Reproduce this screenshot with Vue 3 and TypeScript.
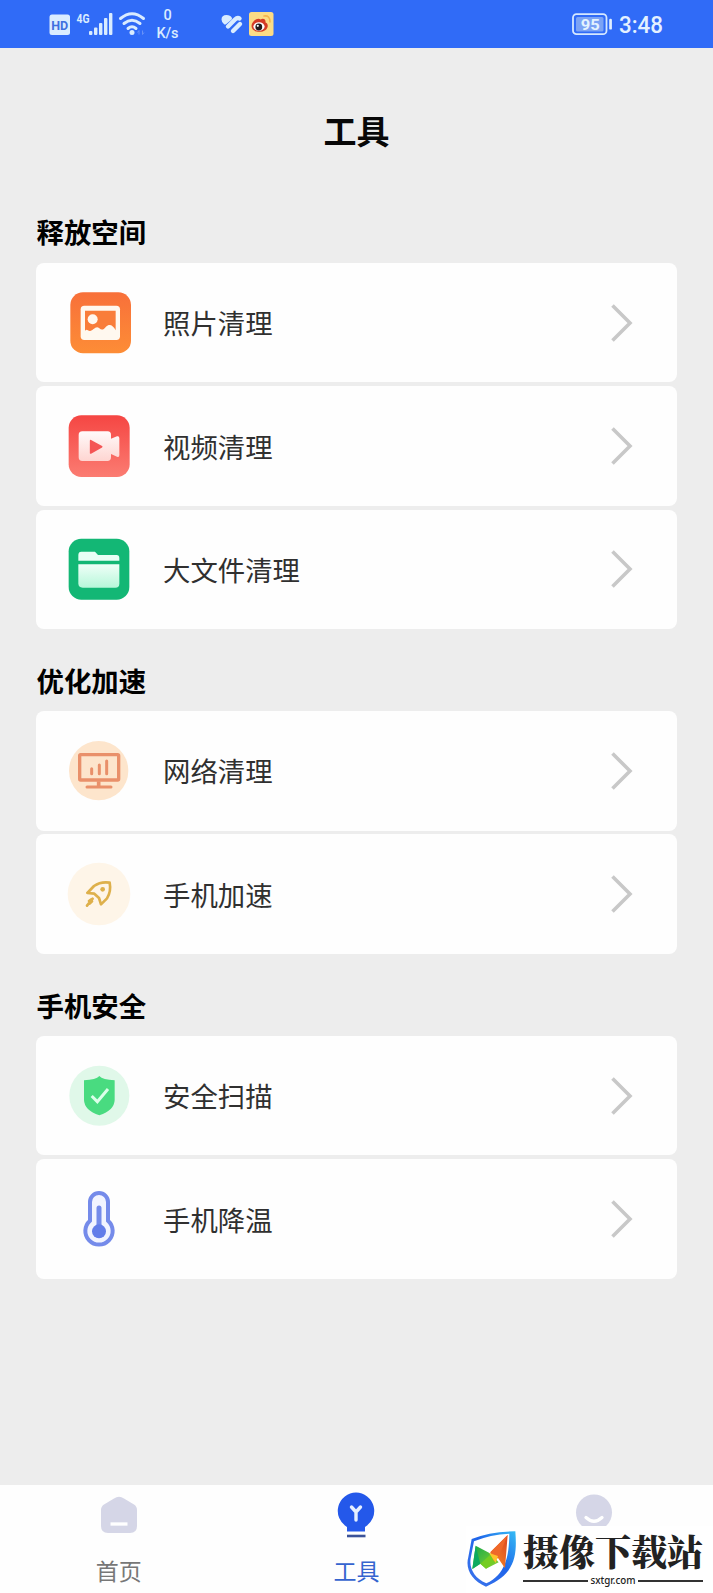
<script setup lang="ts">
interface Tool { icon: string; label: string; box: string }
interface Section { title: string; tools: Tool[] }

const sections: Section[] = [
  {
    title: '释放空间',
    tools: [
      { icon: 'photo', label: '照片清理', box: '141 271 192 192' },
      { icon: 'video', label: '视频清理', box: '141 101 192 192' },
      { icon: 'folder', label: '大文件清理', box: '141 472 192 192' },
    ],
  },
  {
    title: '优化加速',
    tools: [
      { icon: 'network', label: '网络清理', box: '141 266 192 192' },
      { icon: 'rocket', label: '手机加速', box: '141 636 192 192' },
    ],
  },
  {
    title: '手机安全',
    tools: [
      { icon: 'shield', label: '安全扫描', box: '141 250 192 192' },
      { icon: 'thermo', label: '手机降温', box: '141 619 192 192' },
    ],
  },
]
</script>

<template>
  <div class="screen">
    <header class="status">
      <svg class="status-left" viewBox="0 0 260 48" width="260" height="48">
        <rect x="19.5" y="14.5" width="20.5" height="20.5" rx="2.5" fill="#d9ecff" />
        <text x="29.7" y="29.7" text-anchor="middle" font-size="13.5" font-weight="700" textLength="17" lengthAdjust="spacingAndGlyphs" fill="#3e70df">HD</text>
        <text x="46.5" y="23" font-size="12.5" font-weight="700" textLength="13" lengthAdjust="spacingAndGlyphs" fill="#d9ecff">4G</text>
        <g fill="#d9ecff">
          <rect x="59" y="31" width="3.4" height="4" rx="1" />
          <rect x="64" y="27.5" width="3.4" height="7.5" rx="1" />
          <rect x="69" y="23" width="3.4" height="12" rx="1" />
          <rect x="74" y="18" width="3.4" height="17" rx="1" />
          <rect x="79" y="13" width="3.4" height="22" rx="1" />
        </g>
        <g fill="none" stroke="#d9ecff" stroke-width="3" stroke-linecap="round">
          <path d="M90.5 18.5Q102 9 113.5 18.5" />
          <path d="M94 23.5Q102 17 110 23.5" />
          <path d="M98 28.5Q102 25 106 28.5" />
        </g>
        <circle cx="102" cy="32.5" r="2.5" fill="#d9ecff" />
        <path d="M109 34.5v-4l-1.5 2M112.5 30.5v4l1.5-2" fill="none" stroke="#6791f8" stroke-width="1" />
        <text x="137.5" y="20" text-anchor="middle" font-size="14.5" font-weight="500" fill="#d9ecff">0</text>
        <text x="137.5" y="37.7" text-anchor="middle" font-size="14.5" font-weight="500" textLength="22" fill="#d9ecff">K/s</text>
        <g fill="none" stroke="#d9ecff" stroke-width="4.4" stroke-linecap="round" stroke-linejoin="round">
          <path d="M193 19.5Q193 16.5 196.5 16.5Q199.500 16.5 200.500 18.5L195 23Q193 21.500 193 19.5Z" fill="#d9ecff" stroke-width="3" />
          <path d="M198 26.500L205 19.500Q207.5 17 209.5 18.500" />
          <path d="M203 31L210 24" />
        </g>
        <rect x="219" y="12" width="24.5" height="24" rx="2.5" fill="#fbdc86" />
        <path d="M221.5 26C221.5 21 228 17 230.5 19.5C233.5 17.5 236 19.5 235.5 22.5C239 24 238 28 235.5 30C231 33.5 221.5 32 221.5 26Z" fill="#d43b25" />
        <ellipse cx="229" cy="26.5" rx="5.6" ry="4.3" fill="#fff" />
        <circle cx="228.8" cy="27" r="3.4" fill="#211b1b" />
        <circle cx="227.8" cy="25.8" r="1.1" fill="#fff" />
        <path d="M234 16Q240 15 240 22" fill="none" stroke="#f3b44d" stroke-width="1.6" stroke-linecap="round" />
      </svg>
      <svg class="status-right" viewBox="0 0 100 48" width="100" height="48">
        <rect x="3" y="14.2" width="33.5" height="20" rx="3.5" fill="none" stroke="#d5e8ff" stroke-width="1.8" />
        <rect x="6" y="17" width="27.5" height="14.5" rx="1.5" fill="#7ba3f5" />
        <text x="20.3" y="29.7" text-anchor="middle" font-size="15" font-weight="700" textLength="19" lengthAdjust="spacingAndGlyphs" fill="#e4f3ff">95</text>
        <rect x="39.2" y="18.8" width="2.7" height="10.8" rx="1.2" fill="#e0efff" />
        <text x="49" y="32.7" font-size="23" font-weight="500" textLength="44" lengthAdjust="spacingAndGlyphs" fill="#e4f1ff">3:48</text>
      </svg>
    </header>

    <h1 class="title">工具</h1>

    <main class="content">
      <section v-for="section in sections" :key="section.title" class="section">
        <h2 class="section-title">{{ section.title }}</h2>
        <div class="cards">
          <div v-for="tool in section.tools" :key="tool.icon" class="card">
            <svg class="tool-icon" :viewBox="tool.box">
              <template v-if="tool.icon === 'photo'">
                <defs>
                  <linearGradient id="orange" x1="0" y1="0" x2="0" y2="1"><stop offset="0" stop-color="#f8703a" /><stop offset="1" stop-color="#fd8d36" /></linearGradient>
                </defs>
                <rect x="151" y="275" width="182" height="183" rx="38" fill="url(#orange)" />
                <rect x="182" y="315" width="118" height="103" rx="11" fill="#fff8ef" />
                <path d="M195 330H287V389C279 373 268 368 258 378C250 388 245 389 238 383C227 373 220 391 210 391C202 391 202 384 195 390Z" fill="#f97d3a" />
                <circle cx="218" cy="356" r="15" fill="#fff8ef" />
              </template>
              <template v-else-if="tool.icon === 'video'">
                <defs>
                  <linearGradient id="red" x1="0" y1="0" x2="0" y2="1"><stop offset="0" stop-color="#f54643" /><stop offset="1" stop-color="#fb7c72" /></linearGradient>
                  <linearGradient id="camera" x1="0" y1="0" x2="0" y2="1"><stop offset="0" stop-color="#fffafa" /><stop offset="1" stop-color="#fed5d1" /></linearGradient>
                </defs>
                <rect x="146" y="105" width="183" height="185" rx="38" fill="url(#red)" />
                <path d="M187 153H263Q273 153 273 164V175L291 168Q298 166 298 174V224Q298 232 291 229L273 221V230Q273 242 262 242H187Q176 242 176 231V164Q176 153 187 153Z" fill="url(#camera)" />
                <path d="M212 181L245 199L212 218Z" fill="#f45555" stroke="#f45555" stroke-width="5" stroke-linejoin="round" />
              </template>
              <template v-else-if="tool.icon === 'folder'">
                <defs>
                  <linearGradient id="folder-fill" x1="0" y1="0" x2="0" y2="1"><stop offset="0" stop-color="#effff8" /><stop offset="1" stop-color="#b7f7d9" /></linearGradient>
                </defs>
                <rect x="146" y="477" width="182" height="183" rx="38" fill="#13b775" />
                <path d="M184 516H225L234 526H290Q298 526 298 535V543H175V526Q175 516 184 516Z" fill="#e8fff5" />
                <path d="M175 554H298V612Q298 624 286 624H188Q175 624 175 611Z" fill="url(#folder-fill)" />
              </template>
              <template v-else-if="tool.icon === 'network'">
                <circle cx="236" cy="361" r="89" fill="#fde5cc" />
                <g fill="none" stroke="#e9906a">
                  <rect x="179" y="313" width="117" height="76" rx="3" stroke-width="10" />
                  <path d="M236 393V408" stroke-width="11" />
                  <path d="M201 410H273M215 355V370M238 344V370M260 332V370" stroke-width="9" stroke-linecap="round" />
                </g>
              </template>
              <template v-else-if="tool.icon === 'rocket'">
                <circle cx="237" cy="732" r="94" fill="#fef5e8" />
                <g fill="none" stroke="#deb04b" stroke-width="8" stroke-linecap="round" stroke-linejoin="round">
                  <path d="M202 729L222 708Q242 694 269 698Q274 724 261 745L243 763L237 744L223 731Z" />
                  <path d="M218 746L201 767M214 748L207 753M216 754L209 761" />
                </g>
                <circle cx="248" cy="718" r="7" fill="#deb04b" />
              </template>
              <template v-else-if="tool.icon === 'shield'">
                <circle cx="238" cy="345" r="90" fill="#e0f8e9" />
                <path d="M238 286Q248 297 284 299V358Q283 389 238 404Q193 389 192 358V299Q228 297 238 286Z" fill="#49db80" />
                <path d="M215 346L232 363L264 325" fill="none" stroke="#dcffe9" stroke-width="9" />
              </template>
              <template v-else>
                <g fill="none" stroke="#758bea" stroke-width="12">
                  <path d="M210 720V664A27 27 0 0 1 264 664V720A41 41 0 1 1 210 720Z" fill="#f2f4ff" />
                  <path d="M237 682V751" stroke-width="15" stroke-linecap="round" />
                </g>
                <circle cx="237" cy="752" r="21" fill="#637de9" />
              </template>
            </svg>
            <span class="label">{{ tool.label }}</span>
            <svg class="chevron" viewBox="0 0 24 40" width="24" height="40">
              <path d="M2.5 2.5L20 20L2.5 37.5" fill="none" stroke="#c8c8c8" stroke-width="3.6" />
            </svg>
          </div>
        </div>
      </section>
    </main>

    <nav class="nav">
      <div class="tab">
        <svg class="tab-icon" viewBox="0 0 44 52" width="44" height="52">
          <path d="M17 6.5Q22 3 27 6.5L37 12.5Q40 14.5 40 18V34Q40 41 33 41H11Q4 41 4 34V18Q4 14.5 7 12.5Z" fill="#d5d6e7" />
          <path d="M13.5 32H30.5" stroke="#fff" stroke-width="3.3" />
        </svg>
        <span>首页</span>
      </div>
      <div class="tab active">
        <svg class="tab-icon" viewBox="0 0 44 52" width="44" height="52">
          <path d="M22 .5A18.5 18.5 0 0 1 31 35V39.5H13V35A18.5 18.5 0 0 1 22 .5Z" fill="#2458ea" />
          <path d="M17.5 15L22 20L26.5 15M22 20V28" fill="none" stroke="#e5efff" stroke-width="3.4" stroke-linecap="round" stroke-linejoin="round" />
          <path d="M13 44H31.5" stroke="#3b5298" stroke-width="2.6" />
        </svg>
        <span>工具</span>
      </div>
      <div class="tab">
        <svg class="tab-icon" viewBox="0 0 44 52" width="44" height="52">
          <circle cx="22" cy="20.5" r="18" fill="#d5d6e7" />
          <path d="M14 25.5Q22 33 30 25.5" fill="none" stroke="#fff" stroke-width="3.2" stroke-linecap="round" />
        </svg>
      </div>
      <div class="brand">
        <svg class="brand-logo" viewBox="0 0 150 174" width="50" height="58">
          <defs>
            <linearGradient id="brand-ring" x1="0" y1="1" x2="1" y2="0"><stop offset="0" stop-color="#3f75ec" /><stop offset=".55" stop-color="#1f65ea" /><stop offset="1" stop-color="#36bcf4" /></linearGradient>
            <linearGradient id="brand-green" x1="0" y1="0" x2="1" y2="1"><stop offset="0" stop-color="#14a84b" /><stop offset="1" stop-color="#8ed42b" /></linearGradient>
            <linearGradient id="brand-orange" x1="0" y1="1" x2="1" y2="0"><stop offset="0" stop-color="#fa9125" /><stop offset="1" stop-color="#db4522" /></linearGradient>
          </defs>
          <path fill-rule="evenodd" d="M14 30Q70 8 145 7C150 75 148 135 57 173C14 155-6 120 4 84ZM21 37L11 88C6 118 22 147 58 163C115 136 126 85 127 14Q70 16 21 37Z" fill="url(#brand-ring)" />
          <path d="M26 50L73 75L95 100L57 119L40 104L16 120Z" fill="url(#brand-green)" />
          <path d="M26 50L40 104L16 120Z" fill="#0caa60" />
          <path d="M40 104L69 78L86 95L57 119Z" fill="#74cd22" />
          <path d="M70 70L122 18L114 118L93 87L80 95Z" fill="url(#brand-orange)" />
          <path d="M70 70L122 18L93 87Z" fill="#ef682a" />
          <path d="M66 72L93 81L86 102Z" fill="#ffc32b" />
        </svg>
        <div class="brand-copy">
          <div class="brand-name">摄像下载站</div>
          <div class="brand-site"><i></i><span>sxtgr.com</span><i></i></div>
        </div>
      </div>
    </nav>
  </div>
</template>

<style>
body { margin: 0; background: #ededed; }
</style>

<style scoped>
.screen {
  display: flex;
  flex-direction: column;
  width: 713px;
  height: 1593px;
  overflow: hidden;
  background: #ededed;
  font-family: "Liberation Sans", "Noto Sans CJK SC", sans-serif;
}
.status {
  display: flex;
  justify-content: space-between;
  height: 47.5px;
  flex: none;
  padding: 0 43px 0 30px;
  background: #306bf7;
  font-family: Roboto, sans-serif;
}
.title {
  margin: 58px 0 0;
  height: 48px;
  font-family: "Noto Sans CJK SC", sans-serif;
  font-size: 33px;
  font-weight: 700;
  line-height: 48px;
  text-align: center;
  color: #080808;
}
.content { flex: 1; padding: 58.4px 36px 0 35.5px; }
.section { margin-bottom: 31.8px; }
.section-title {
  margin: 0;
  height: 51px;
  padding-left: 1px;
  font-family: "Noto Sans CJK SC", sans-serif;
  font-size: 27.4px;
  font-weight: 700;
  line-height: 39px;
  color: #000;
}
.section + .section .section-title { height: 50px; line-height: 38px; }
.cards { display: flex; flex-direction: column; gap: 3.8px; }
.card {
  display: flex;
  align-items: center;
  height: 119.6px;
  box-sizing: border-box;
  padding: 0 43px 0 31.5px;
  border-radius: 8px;
  background: #fefefe;
}
.tool-icon { width: 64px; height: 64px; flex: none; overflow: visible; }
.label {
  flex: 1;
  margin-left: 32px;
  padding-bottom: 1px;
  font-family: "Noto Sans CJK SC", sans-serif;
  font-size: 27.4px;
  line-height: 40px;
  color: #303030;
}
.nav {
  position: relative;
  display: grid;
  grid-template-columns: repeat(3, 1fr);
  height: 108px;
  flex: none;
  background: #fefefe;
}
.tab {
  display: flex;
  flex-direction: column;
  align-items: center;
  padding-top: 7px;
  font-family: "Noto Sans CJK SC", sans-serif;
  font-size: 23px;
  line-height: 34px;
  color: #777;
}
.tab span { margin-top: 9px; }
.active { color: #3564cf; }
.brand {
  position: absolute;
  right: 0;
  bottom: 0;
  display: flex;
  width: 247px;
  height: 67px;
  background: #fff;
}
.brand-logo { margin: 3px 0 0 1px; flex: none; }
.brand-copy { width: 180px; margin-left: 6px; }
.brand-name {
  height: 49px;
  font-family: "Noto Serif CJK SC", "Noto Sans CJK SC", serif;
  font-size: 36px;
  font-weight: 900;
  line-height: 49px;
  white-space: nowrap;
  color: #222;
}
.brand-site {
  display: flex;
  align-items: center;
  height: 12px;
  gap: 2px;
  font-family: "Noto Sans", sans-serif;
  font-size: 9.8px;
  font-weight: 500;
  line-height: 12px;
  color: #222;
}
.brand-site i { flex: 1; height: 2px; background: #333; }
</style>
